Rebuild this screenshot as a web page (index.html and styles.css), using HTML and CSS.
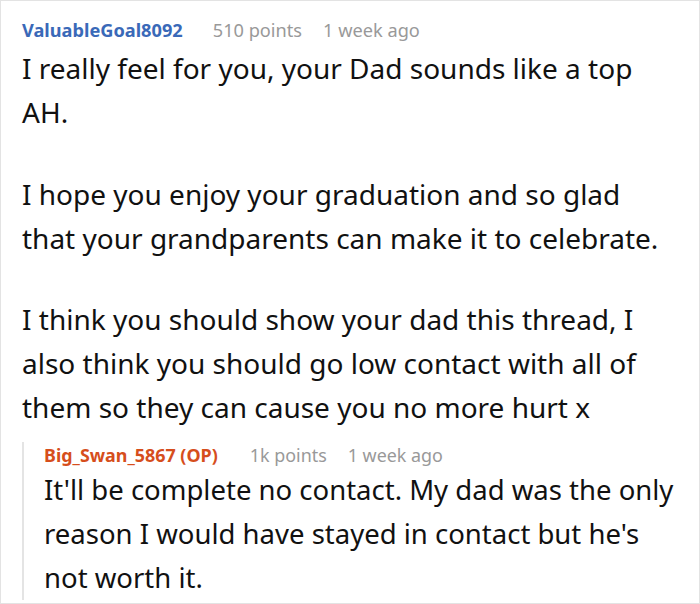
FILE: index.html
```html
<!DOCTYPE html>
<html>
<head>
<meta charset="utf-8">
<link rel="stylesheet" href="styles.css">
</head>
<body>
<div class="frame">
  <div class="comment">
    <div class="meta">
      <span class="user">ValuableGoal8092</span>
      <span class="info">510 points</span>
      <span class="info">1 week ago</span>
    </div>
    <div class="body">
      <p>I really feel for you, your Dad sounds like a top AH.</p>
      <p>I hope you enjoy your graduation and so glad that your grandparents can make it to celebrate.</p>
      <p>I think you should show your dad this thread, I also think you should go low contact with all of them so they can cause you no more hurt x</p>
    </div>
    <div class="reply">
      <div class="meta reply-meta">
        <span class="user op">Big_Swan_5867 (OP)</span>
        <span class="info">1k points</span>
        <span class="info">1 week ago</span>
      </div>
      <div class="body reply-body">
        <p>It'll be complete no contact. My dad was the only reason I would have stayed in contact but he's not worth it.</p>
      </div>
    </div>
  </div>
</div>
</body>
</html>
```

FILE: styles.css
```css
html, body {
  margin: 0;
  padding: 0;
  background: #ffffff;
}
.frame {
  box-sizing: border-box;
  width: 700px;
  height: 604px;
  border: 1px solid #e3e3e3;
  background: #ffffff;
  font-family: "Noto Sans", "Open Sans", sans-serif;
  color: #111111;
  padding: 16px 22px 0 21px;
  overflow: hidden;
}
.meta {
  display: flex;
  align-items: baseline;
  font-size: 18.2px;
  line-height: 26px;
  margin-bottom: 3px;
}
.user {
  font-weight: 700;
  color: #3a69b8;
  margin-right: 30px;
}
.user.op {
  color: #d64e1c;
  margin-right: 32px;
}
.info {
  color: #999999;
  margin-right: 21px;
}
.body {
  font-size: 28px;
  line-height: 44px;
}
.body p {
  margin: 0 0 37.5px 0;
}
.body p:last-child {
  margin-bottom: 0;
}
.reply {
  margin-top: 22px;
  border-left: 2px solid #e4e4e4;
  padding-left: 20px;
}
.reply-meta {
  font-size: 17.9px;
  margin-top: -9px;
  margin-bottom: 0;
}
.reply-body {
  font-size: 27.5px;
}
```
